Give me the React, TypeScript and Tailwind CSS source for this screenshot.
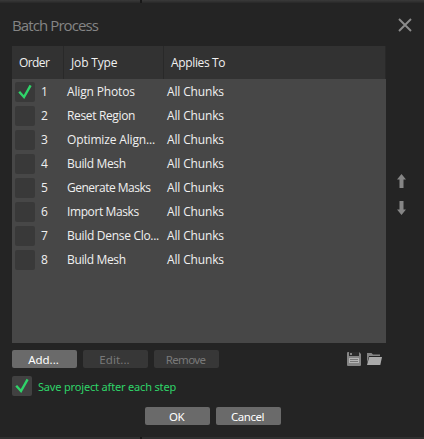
import React from "react";

const jobs = [
  { name: "Align Photos", checked: true, tracking: "tracking-[-0.15px]" },
  { name: "Reset Region", tracking: "tracking-[-0.35px]" },
  { name: "Optimize Align...", tracking: "tracking-[-0.15px]" },
  { name: "Build Mesh", tracking: "tracking-[-0.35px]" },
  { name: "Generate Masks", tracking: "tracking-[-0.5px]" },
  { name: "Import Masks", tracking: "tracking-[-0.4px]" },
  { name: "Build Dense Clo...", tracking: "tracking-[-0.3px]" },
  { name: "Build Mesh", tracking: "tracking-[-0.35px]" },
];

function Check({ checked = false, tone = "bg-[#393939]" }: { checked?: boolean; tone?: string }) {
  return (
    <span className={`block size-5 shrink-0 rounded-xs ${tone}`}>
      {checked && (
        <svg viewBox="0 0 20 20" className="size-5" fill="none" stroke="#2fd469" strokeWidth="2.4">
          <path d="M4.2 9.7L9 15L15.6 3.3" />
        </svg>
      )}
    </span>
  );
}

function Button({
  children,
  disabled = false,
  tracking = "tracking-[-0.5px]",
}: {
  children: React.ReactNode;
  disabled?: boolean;
  tracking?: string;
}) {
  return (
    <button
      disabled={disabled}
      className={`h-[18px] w-[65px] rounded-xs pt-px pr-[2px] text-center font-['Noto_Sans',sans-serif] text-[11.5px] leading-[18px] ${tracking} ${
        disabled ? "bg-[#373737] text-[#797979]" : "bg-[#6a6a6a] text-white"
      }`}
    >
      {children}
    </button>
  );
}

function Arrow({ down = false }: { down?: boolean }) {
  return (
    <svg width="9" height="14" viewBox="0 0 9 14" fill="#858585" className={down ? "rotate-180" : ""}>
      <path d="M4.5 0L9 5.5H6.5V14H2.5V5.5H0Z" />
    </svg>
  );
}

export default function App() {
  return (
    <div className="flex h-[439px] w-[424px] flex-col bg-[#242424] font-['Open_Sans','Noto_Sans',sans-serif] text-[12px] text-[#f0f0f0]">
      <div className="flex h-[3px] shrink-0 bg-gradient-to-b from-[#3a3a3a] to-[#282828]">
        <div className="ml-[140px] h-[3px] w-[2px] bg-[#181818]" />
      </div>
      <header className="flex h-[43px] shrink-0 items-center justify-between px-[12px]">
        <h1 className="pt-[2px] text-[15px] tracking-[-0.9px] text-[#858585]">Batch Process</h1>
        <svg width="14" height="14" viewBox="0 0 14 14" stroke="#8c8c8c" strokeWidth="1.9" fill="none">
          <path d="M1 1L13 13M13 1L1 13" />
        </svg>
      </header>

      <main className="flex h-[297px] shrink-0 pl-[12px]">
        <section className="w-[374px] bg-[#474747]">
          <div className="flex h-[33px] bg-[#323232] leading-[33px]">
            <div className="w-[52px] border-r border-[#292929] pl-[7px] tracking-[-0.6px]">Order</div>
            <div className="w-[100px] border-r border-[#292929] pl-[7px] tracking-[-0.15px]">Job Type</div>
            <div className="flex-1 border-r border-[#292929] pl-[7px] tracking-[-0.35px]">Applies To</div>
          </div>
          <div className="pt-px">
            {jobs.map((job, i) => (
              <div key={i} className="flex h-6 items-center pl-[3px] leading-6">
                <Check checked={job.checked} />
                <span className="w-[32px] pl-[6px]">{i + 1}</span>
                <span className={`w-[100px] whitespace-nowrap ${job.tracking}`}>{job.name}</span>
                <span className="tracking-[-0.15px]">All Chunks</span>
              </div>
            ))}
          </div>
        </section>
        <aside className="ml-[11px] flex flex-col gap-[13px] pt-[128px]">
          <Arrow />
          <Arrow down />
        </aside>
      </main>

      <div className="mt-[7px] flex h-[18px] shrink-0 gap-[6px] pl-[12px]">
        <Button tracking="tracking-[0px]">Add...</Button>
        <Button disabled tracking="tracking-[0.1px]">Edit...</Button>
        <Button disabled tracking="tracking-[-0.65px]">Remove</Button>
        <div className="ml-[122px] flex gap-[6px] pt-[2px]">
          <svg width="14" height="14" viewBox="0 0 14 14">
            <path d="M0 1Q0 0 1 0H2V4H12V0L14 2V13Q14 14 13 14H1Q0 14 0 13Z" fill="#858585" />
            <path d="M2 0H12V4H2Z" fill="#2b2b2b" />
            <path d="M3 1H5V3H3Z" fill="#858585" />
            <path d="M2 6H12V11H2Z" fill="#b5b5b5" />
            <path d="M3 7H11V8H3ZM3 9H11V10H3Z" fill="#777777" />
          </svg>
          <svg width="15" height="14" viewBox="0 0 15 14">
            <path d="M0 1H4.5L6 2.5H13V4H2L0 11Z" fill="#858585" />
            <path d="M2.2 5H15L13.3 13H0Z" fill="#aaaaaa" />
          </svg>
        </div>
      </div>

      <label className="mt-[8px] flex h-5 shrink-0 items-center gap-[6px] pl-[12px] font-['Noto_Sans',sans-serif] text-[11px] tracking-[-0.17px] text-[#2fd469]">
        <Check checked tone="bg-[#414141]" />
        <span className="mt-[2px] whitespace-nowrap">Save project after each step</span>
      </label>
      <div className="mt-[11px] flex shrink-0 gap-[6px] pl-[145px]">
        <Button>OK</Button>
        <Button>Cancel</Button>
      </div>
      <div className="mt-auto flex h-[2px] bg-[#303030]">
        <div className="ml-[140px] h-[2px] w-[2px] bg-[#181818]" />
      </div>
    </div>
  );
}
